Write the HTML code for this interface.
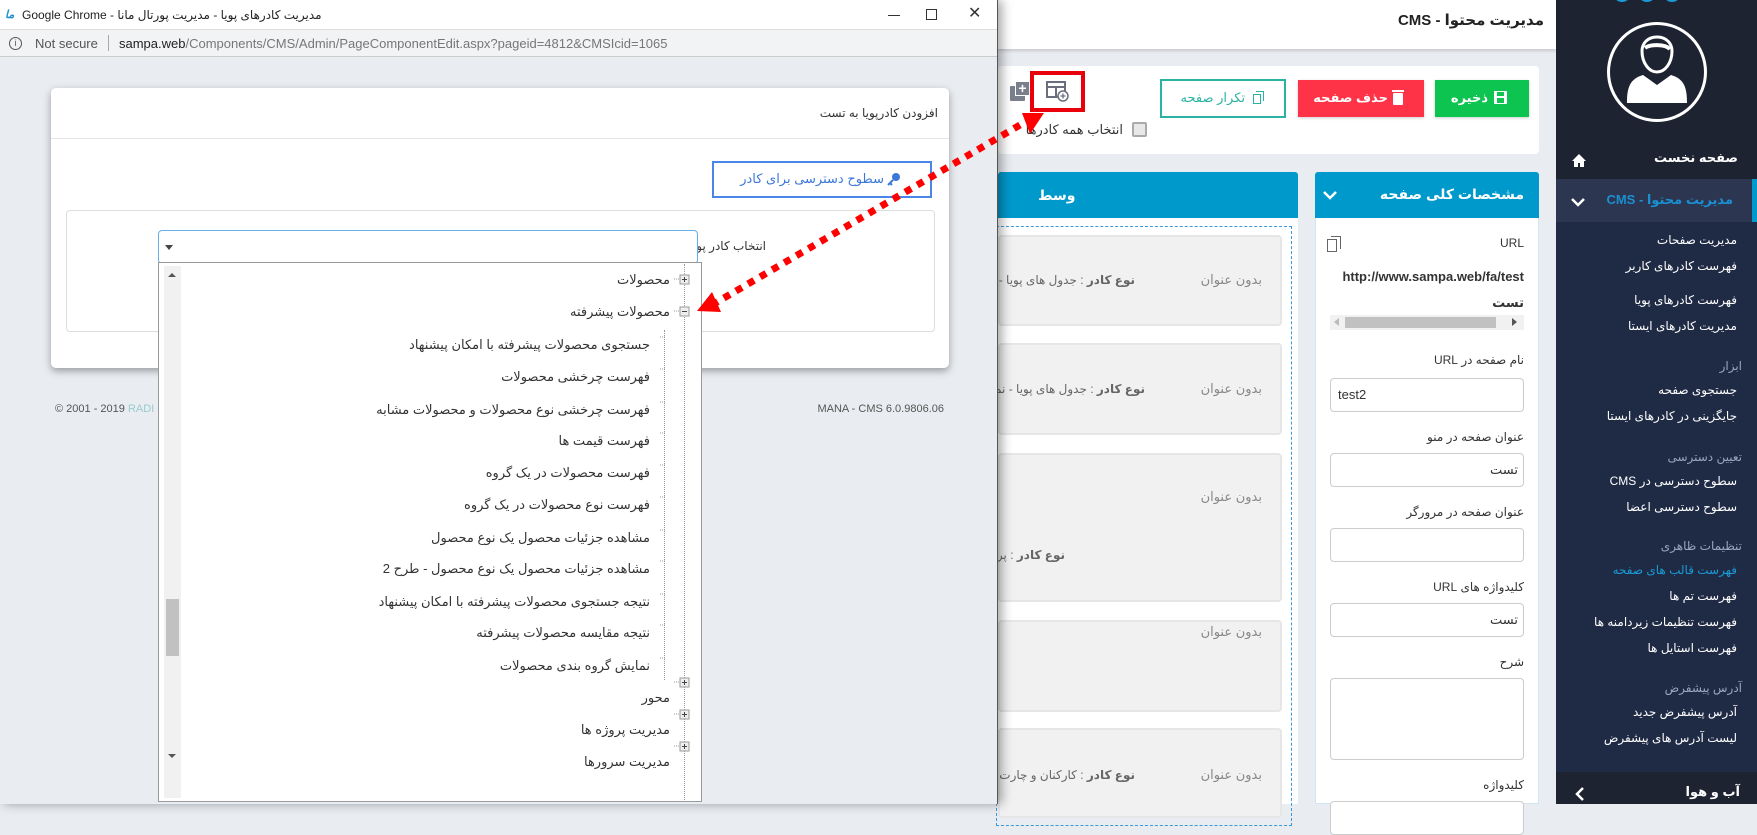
<!DOCTYPE html>
<html><head><meta charset="utf-8">
<style>
*{margin:0;padding:0;box-sizing:border-box}
body{width:1757px;height:804px;overflow:hidden;position:relative;background:#e9ecf1;font-family:"Liberation Sans","DejaVu Sans",sans-serif;font-size:12px;color:#333}
.a{position:absolute}
.t{position:absolute;white-space:nowrap;direction:rtl;line-height:16px}
.inp{position:absolute;background:#fff;border:1px solid #ccc;border-radius:4px}
.dd{position:absolute;white-space:nowrap;direction:rtl;line-height:16px;font-size:13px;color:#333}
</style></head><body>

<!-- main page header -->
<div class="a" style="left:998px;top:0;width:558px;height:49px;background:#fff;box-shadow:0 2px 3px rgba(0,0,0,.15)"></div>
<div class="t" style="right:213px;top:13px;font-size:15px;font-weight:bold;color:#222">مدیریت محتوا - CMS</div>

<!-- toolbar card -->
<div class="a" style="left:998px;top:66px;width:541px;height:88px;background:#fff;border-radius:4px"></div>
<div class="a" style="left:1435px;top:80px;width:94px;height:37px;background:#0cc44f;box-shadow:0 1px 3px rgba(0,0,0,.2)"></div>
<div class="t" style="right:269px;top:90px;color:#fff;font-weight:bold;font-size:13px">ذخیره</div>
<div class="a" style="left:1494px;top:91px;width:13px;height:13px;background:#fff;border-radius:1px"><div class="a" style="left:3px;top:1px;width:7px;height:4px;background:#0cc44f"></div><div class="a" style="left:3px;top:7px;width:7px;height:5px;background:#0cc44f"></div></div>
<div class="a" style="left:1298px;top:80px;width:126px;height:37px;background:#ff3348;box-shadow:0 1px 3px rgba(0,0,0,.2)"></div>
<div class="t" style="right:369px;top:90px;color:#fff;font-weight:bold;font-size:13px">حذف صفحه</div>
<div class="a" style="left:1393px;top:93px;width:10px;height:12px;background:#fff;border-radius:1px"></div>
<div class="a" style="left:1392px;top:90px;width:12px;height:2px;background:#fff"></div>
<div class="a" style="left:1160px;top:79px;width:126px;height:39px;border:2px solid #2ab3a3;background:#fff"></div>
<div class="t" style="right:512px;top:90px;color:#2ab3a3;font-size:13px">تکرار صفحه</div>
<div class="a" style="left:1253px;top:94px;width:8px;height:10px;border:1px solid #2ab3a3"></div>
<div class="a" style="left:1256px;top:91px;width:8px;height:10px;border-top:1px solid #2ab3a3;border-right:1px solid #2ab3a3"></div>
<!-- icons -->
<div class="a" style="left:1010px;top:86px;width:15px;height:15px;background:#7a7f8c;border-radius:1px"></div>
<div class="a" style="left:1015px;top:81px;width:15px;height:15px;background:#7a7f8c;border:1px solid #fff;color:#fff;font-size:14px;line-height:12px;text-align:center;font-weight:bold">+</div>
<div class="a" style="left:1030px;top:71px;width:55px;height:41px;border:4px solid #e8000b"></div>
<svg class="a" style="left:1046px;top:81px" width="24" height="22"><rect x="1" y="1" width="18" height="15" fill="none" stroke="#6a6f7c" stroke-width="2"/><line x1="1" y1="6" x2="19" y2="6" stroke="#6a6f7c" stroke-width="2"/><line x1="10" y1="6" x2="10" y2="16" stroke="#6a6f7c" stroke-width="2"/><circle cx="17" cy="15" r="5" fill="#fff" stroke="#6a6f7c" stroke-width="1.5"/><path d="M14.5 15h5M17 12.5v5" stroke="#6a6f7c" stroke-width="1.3"/></svg>
<div class="a" style="left:1132px;top:122px;width:15px;height:15px;border:2px solid #aaa;background:#e8e8e8;border-radius:2px"></div>
<div class="t" style="right:634px;top:122px;font-size:13px;color:#333">انتخاب همه کادرها</div>

<!-- middle panel -->
<div class="a" style="left:998px;top:172px;width:300px;height:46px;background:#0099cc;border-radius:3px 3px 0 0"></div>
<div class="t" style="left:1038px;top:187px;color:#fff;font-weight:bold;font-size:14px">وسط</div>
<div class="a" style="left:998px;top:218px;width:300px;height:586px;background:#fff"></div>
<div class="a" style="left:996px;top:226px;width:296px;height:600px;border:1px dashed #3a9ad9"></div>
<div class="a" style="left:998px;top:235px;width:284px;height:91px;background:#f1f1f1;border:2px solid #e6e6e6;border-radius:4px"></div>
<div class="a" style="left:998px;top:343px;width:284px;height:92px;background:#f1f1f1;border:2px solid #e6e6e6;border-radius:4px"></div>
<div class="a" style="left:998px;top:453px;width:284px;height:149px;background:#f1f1f1;border:2px solid #e6e6e6;border-radius:4px"></div>
<div class="a" style="left:998px;top:620px;width:284px;height:92px;background:#f1f1f1;border:2px solid #e6e6e6;border-radius:4px"></div>
<div class="a" style="left:998px;top:728px;width:284px;height:90px;background:#f1f1f1;border:2px solid #e6e6e6;border-radius:4px"></div>
<div class="t" style="right:495px;top:272px;color:#888;font-size:13px">بدون عنوان</div>
<div class="t" style="right:622px;top:272px;color:#666;font-size:12px"><b>نوع کادر</b> : جدول های پویا - نم</div>
<div class="t" style="right:495px;top:381px;color:#888;font-size:13px">بدون عنوان</div>
<div class="t" style="right:612px;top:381px;color:#666;font-size:12px"><b>نوع کادر</b> : جدول های پویا - نمای</div>
<div class="t" style="right:495px;top:489px;color:#888;font-size:13px">بدون عنوان</div>
<div class="t" style="right:692px;top:547px;color:#666;font-size:12px"><b>نوع کادر</b> : پرسشهای متداول - فهرست پرسش های م</div>
<div class="t" style="right:495px;top:624px;color:#888;font-size:13px">بدون عنوان</div>
<div class="t" style="right:495px;top:767px;color:#888;font-size:13px">بدون عنوان</div>
<div class="t" style="right:622px;top:767px;color:#666;font-size:12px"><b>نوع کادر</b> : کارکنان و چارت</div>

<!-- right panel -->
<div class="a" style="left:1315px;top:172px;width:224px;height:46px;background:#0099cc;border-radius:3px 3px 0 0"></div>
<div class="t" style="right:233px;top:186px;color:#fff;font-weight:bold;font-size:14px">مشخصات کلی صفحه</div>
<svg class="a" style="left:1322px;top:189px" width="16" height="12"><path d="M2 3l6 6 6-6" fill="none" stroke="#fff" stroke-width="2.5"/></svg>
<div class="a" style="left:1315px;top:218px;width:224px;height:586px;background:#fff;border:1px solid #cfe7f2;border-top:0"></div>
<div class="a" style="left:1327px;top:239px;width:10px;height:13px;border:1.5px solid #666"></div>
<div class="a" style="left:1331px;top:236px;width:10px;height:13px;border-top:1.5px solid #666;border-right:1.5px solid #666"></div>
<div class="t" style="right:233px;top:235px;font-size:12px">URL</div>
<div class="t" style="right:233px;top:269px;font-size:13px;font-weight:bold;direction:ltr">http://www.sampa.web/fa/test</div>
<div class="t" style="right:233px;top:295px;font-size:13px;font-weight:bold">تست</div>
<div class="a" style="left:1330px;top:315px;width:194px;height:15px;background:#f1f1f1"></div>
<div class="a" style="left:1345px;top:317px;width:151px;height:11px;background:#c1c1c1"></div>
<div class="a" style="left:1512px;top:318px;width:0;height:0;border-left:5px solid #555;border-top:4px solid transparent;border-bottom:4px solid transparent"></div>
<div class="a" style="left:1334px;top:318px;width:0;height:0;border-right:5px solid #bbb;border-top:4px solid transparent;border-bottom:4px solid transparent"></div>
<div class="t" style="right:233px;top:352px">نام صفحه در URL</div>
<div class="inp" style="left:1330px;top:378px;width:194px;height:34px"></div>
<div class="t" style="left:1338px;top:387px;direction:ltr;font-size:13px">test2</div>
<div class="t" style="right:233px;top:429px">عنوان صفحه در منو</div>
<div class="inp" style="left:1330px;top:453px;width:194px;height:34px"></div>
<div class="t" style="right:239px;top:462px;font-size:13px">تست</div>
<div class="t" style="right:233px;top:504px">عنوان صفحه در مرورگر</div>
<div class="inp" style="left:1330px;top:528px;width:194px;height:34px"></div>
<div class="t" style="right:233px;top:579px">کلیدواژه های URL</div>
<div class="inp" style="left:1330px;top:603px;width:194px;height:34px"></div>
<div class="t" style="right:239px;top:612px;font-size:13px">تست</div>
<div class="t" style="right:233px;top:654px">شرح</div>
<div class="inp" style="left:1330px;top:678px;width:194px;height:82px"></div>
<div class="t" style="right:233px;top:777px">کلیدواژه</div>
<div class="inp" style="left:1330px;top:801px;width:194px;height:34px"></div>

<!-- sidebar -->
<div class="a" style="left:1556px;top:0;width:201px;height:804px;background:#1f2a45"></div>
<div class="a" style="left:1556px;top:0;width:201px;height:179px;background:#1e2331"></div>
<div class="a" style="left:1615px;top:-8px;width:14px;height:10px;border-radius:50%;background:#1a9ad6"></div>
<div class="a" style="left:1640px;top:-8px;width:14px;height:10px;border-radius:50%;background:#1a9ad6"></div>
<div class="a" style="left:1665px;top:-8px;width:14px;height:10px;border-radius:50%;background:#1a9ad6"></div>
<div class="a" style="left:1607px;top:22px;width:100px;height:100px;border:3px solid #fff;border-radius:50%"></div>
<svg class="a" style="left:1625px;top:35px" width="64" height="72"><path d="M32 2c-10 0-15 7-15 14 0 12 7 21 15 21s15-9 15-21c0-7-5-14-15-14z" fill="#1e2331" stroke="#fff" stroke-width="3"/><path d="M20 13c5-4 20-4 25 1" stroke="#fff" stroke-width="4" fill="none"/><path d="M2 68c0-14 2-24 16-28l14 10 14-10c14 4 16 14 16 28z" fill="#fff"/></svg>
<div class="t" style="right:19px;top:150px;color:#fff;font-weight:bold;font-size:13px">صفحه نخست</div>
<svg class="a" style="left:1571px;top:153px" width="16" height="15"><path d="M8 1L1 8h2v6h4v-4h2v4h4V8h2z" fill="#fff"/></svg>
<div class="a" style="left:1556px;top:179px;width:201px;height:43px;background:#2c3651"></div>
<div class="a" style="left:1752px;top:179px;width:5px;height:43px;background:#0099cc"></div>
<div class="t" style="right:24px;top:192px;color:#1a8fd1;font-weight:bold;font-size:13px">مدیریت محتوا - CMS</div>
<svg class="a" style="left:1570px;top:196px" width="16" height="12"><path d="M2 3l6 6 6-6" fill="none" stroke="#fff" stroke-width="2.5"/></svg>
<div style="position:absolute;right:20px;top:0;color:#fff;font-size:12px;direction:rtl;text-align:right">
<div class="t" style="right:0;top:232px">مدیریت صفحات</div>
<div class="t" style="right:0;top:258px">فهرست کادرهای کاربر</div>
<div class="t" style="right:0;top:292px">فهرست کادرهای پویا</div>
<div class="t" style="right:0;top:318px">مدیریت کادرهای ایستا</div>
<div class="t" style="right:-5px;top:358px;color:#9aa6bf">ابزار</div>
<div class="t" style="right:0;top:382px">جستجوی صفحه</div>
<div class="t" style="right:0;top:408px">جایگزینی در کادرهای ایستا</div>
<div class="t" style="right:-5px;top:449px;color:#9aa6bf">تعیین دسترسی</div>
<div class="t" style="right:0;top:473px">سطوح دسترسی در CMS</div>
<div class="t" style="right:0;top:499px">سطوح دسترسی اعضا</div>
<div class="t" style="right:-5px;top:538px;color:#9aa6bf">تنظیمات ظاهری</div>
<div class="t" style="right:0;top:562px;color:#1a9ad6">فهرست قالب های صفحه</div>
<div class="t" style="right:0;top:588px">فهرست تم ها</div>
<div class="t" style="right:0;top:614px">فهرست تنظیمات زیردامنه ها</div>
<div class="t" style="right:0;top:640px">فهرست استایل ها</div>
<div class="t" style="right:-5px;top:680px;color:#9aa6bf">آدرس پیشفرض</div>
<div class="t" style="right:0;top:704px">آدرس پیشفرض جدید</div>
<div class="t" style="right:0;top:730px">لیست آدرس های پیشفرض</div>
</div>
<div class="a" style="left:1556px;top:772px;width:201px;height:32px;background:#1e2331"></div>
<div class="t" style="right:17px;top:784px;color:#fff;font-weight:bold;font-size:13px">آب و هوا</div>
<svg class="a" style="left:1574px;top:786px" width="12" height="16"><path d="M9 2L3 8l6 6" fill="none" stroke="#fff" stroke-width="2.5"/></svg>

<!-- popup window -->
<div class="a" style="left:0;top:0;width:998px;height:804px;background:#e9ecf1;border-right:1px solid #555;box-shadow:4px 0 10px rgba(0,0,0,.35)"></div>
<div class="a" style="left:0;top:0;width:997px;height:30px;background:#fff;border-bottom:1px solid #ddd"></div>
<div class="t" style="left:5px;top:7px;color:#1a8fd1;font-weight:bold;font-style:italic;font-size:11px">ما</div>
<div class="t" style="left:22px;top:7px;direction:ltr;font-size:12px;color:#222">Google Chrome - <span style="direction:rtl;unicode-bidi:embed">مدیریت کادرهای پویا - مدیریت پورتال مانا</span></div>
<div class="a" style="left:888px;top:15px;width:12px;height:1px;background:#333"></div>
<div class="a" style="left:926px;top:9px;width:11px;height:11px;border:1px solid #333"></div>
<div class="t" style="left:968px;top:6px;font-size:16px;color:#333">✕</div>
<div class="a" style="left:0;top:30px;width:997px;height:27px;background:#f1f3f4;border-bottom:1px solid #ccc"></div>
<div class="a" style="left:9px;top:37px;width:13px;height:13px;border:1px solid #555;border-radius:50%;font-size:9px;line-height:11px;text-align:center;color:#555">i</div>
<div class="t" style="left:35px;top:36px;direction:ltr;font-size:13px;color:#555">Not secure</div>
<div class="a" style="left:108px;top:35px;width:1px;height:16px;background:#aaa"></div>
<div class="t" style="left:119px;top:36px;direction:ltr;font-size:13px;color:#777"><span style="color:#222">sampa.web</span>/Components/CMS/Admin/PageComponentEdit.aspx?pageid=4812&amp;CMSIcid=1065</div>

<!-- dialog -->
<div class="a" style="left:51px;top:88px;width:898px;height:280px;background:#fff;border-radius:5px;box-shadow:0 3px 8px rgba(0,0,0,.35)"></div>
<div class="t" style="right:819px;top:105px;font-size:12px;color:#333">افزودن کادرپویا به تست</div>
<div class="a" style="left:51px;top:138px;width:898px;height:1px;background:#e5e5e5"></div>
<div class="a" style="left:712px;top:161px;width:220px;height:37px;border:2px solid #4a86e8;background:#fff"></div>
<div class="t" style="right:873px;top:171px;color:#3c78d8;font-size:13px">سطوح دسترسی برای کادر</div>
<svg class="a" style="left:887px;top:172px" width="14" height="14"><circle cx="9" cy="5" r="4" fill="#3c78d8"/><path d="M6 8L1 13M3 11l2 2" stroke="#3c78d8" stroke-width="2"/></svg>
<div class="a" style="left:66px;top:210px;width:869px;height:122px;border:1px solid #ddd;border-radius:4px"></div>
<div class="t" style="right:991px;top:238px;font-size:12px">انتخاب کادر پویا</div>
<div class="a" style="left:158px;top:230px;width:540px;height:34px;border:1px solid #66afe9;border-radius:4px;background:#fff"></div>
<div class="a" style="left:165px;top:245px;width:0;height:0;border-top:5px solid #444;border-left:4px solid transparent;border-right:4px solid transparent"></div>
<div class="t" style="left:55px;top:401px;direction:ltr;font-size:11px;color:#555">© 2001 - 2019 <span style="color:#9cc">RADI</span></div>
<div class="t" style="right:813px;top:401px;direction:ltr;font-size:11px;color:#555">MANA - CMS 6.0.9806.06</div>

<!-- dropdown -->
<div class="a" style="left:158px;top:262px;width:544px;height:540px;background:#fff;border:1px solid #999"></div>
<div class="a" style="left:164px;top:266px;width:17px;height:532px;background:#f1f1f1"></div>
<div class="a" style="left:166px;top:599px;width:13px;height:57px;background:#c1c1c1"></div>
<div class="a" style="left:168px;top:273px;width:0;height:0;border-bottom:4px solid #555;border-left:4px solid transparent;border-right:4px solid transparent"></div>
<div class="a" style="left:168px;top:754px;width:0;height:0;border-top:4px solid #555;border-left:4px solid transparent;border-right:4px solid transparent"></div>
<div class="a" style="left:684px;top:264px;width:0;height:536px;border-left:1px dotted #999"></div>
<div class="a" style="left:664px;top:330px;width:0;height:350px;border-left:1px dotted #999"></div>
<div class="dd" style="right:1087px;top:272px">محصولات</div>
<div class="dd" style="right:1087px;top:304px">محصولات پیشرفته</div>
<div class="dd" style="right:1107px;top:337px">جستجوی محصولات پیشرفته با امکان پیشنهاد</div>
<div class="dd" style="right:1107px;top:369px">فهرست چرخشی محصولات</div>
<div class="dd" style="right:1107px;top:402px">فهرست چرخشی نوع محصولات و محصولات مشابه</div>
<div class="dd" style="right:1107px;top:433px">فهرست قیمت ها</div>
<div class="dd" style="right:1107px;top:465px">فهرست محصولات در یک گروه</div>
<div class="dd" style="right:1107px;top:497px">فهرست نوع محصولات در یک گروه</div>
<div class="dd" style="right:1107px;top:530px">مشاهده جزئیات محصول یک نوع محصول</div>
<div class="dd" style="right:1107px;top:561px">مشاهده جزئیات محصول یک نوع محصول - طرح 2</div>
<div class="dd" style="right:1107px;top:594px">نتیجه جستجوی محصولات پیشرفته با امکان پیشنهاد</div>
<div class="dd" style="right:1107px;top:625px">نتیجه مقایسه محصولات پیشرفته</div>
<div class="dd" style="right:1107px;top:658px">نمایش گروه بندی محصولات</div>
<div class="dd" style="right:1087px;top:690px">محور</div>
<div class="dd" style="right:1087px;top:722px">مدیریت پروژه ها</div>
<div class="dd" style="right:1087px;top:754px">مدیریت سرورها</div>
<svg class="a" style="left:660px;top:262px" width="40" height="540">
<g fill="#eee" stroke="#999"><rect x="20" y="13" width="9" height="9"/><rect x="20" y="45" width="9" height="9"/><rect x="20" y="416" width="9" height="9"/><rect x="20" y="448" width="9" height="9"/><rect x="20" y="480" width="9" height="9"/></g>
<g stroke="#444"><path d="M22 17.5h5M24.5 15v5M22 49.5h5M22 420.5h5M24.5 418v5M22 452.5h5M24.5 450v5M22 484.5h5M24.5 482v5"/></g>
<g stroke="#999" stroke-dasharray="1 1"><path d="M14 17h6M14 49h6M0 75h6M0 107h6M0 140h6M0 171h6M0 203h6M0 235h6M0 268h6M0 299h6M0 332h6M0 363h6M0 396h6M14 420h6M14 452h6M14 484h6"/></g>
</svg>

<!-- red dotted arrow -->
<svg class="a" style="left:0;top:0" width="1100" height="400">
<line x1="1020" y1="125" x2="712" y2="305" stroke="#f00" stroke-width="7" stroke-dasharray="7 7"/>
<polygon points="1022,113 1044,113 1030,134" fill="#f00"/>
<polygon points="697,311 712,292 721,312" fill="#f00"/>
</svg>
</body></html>
